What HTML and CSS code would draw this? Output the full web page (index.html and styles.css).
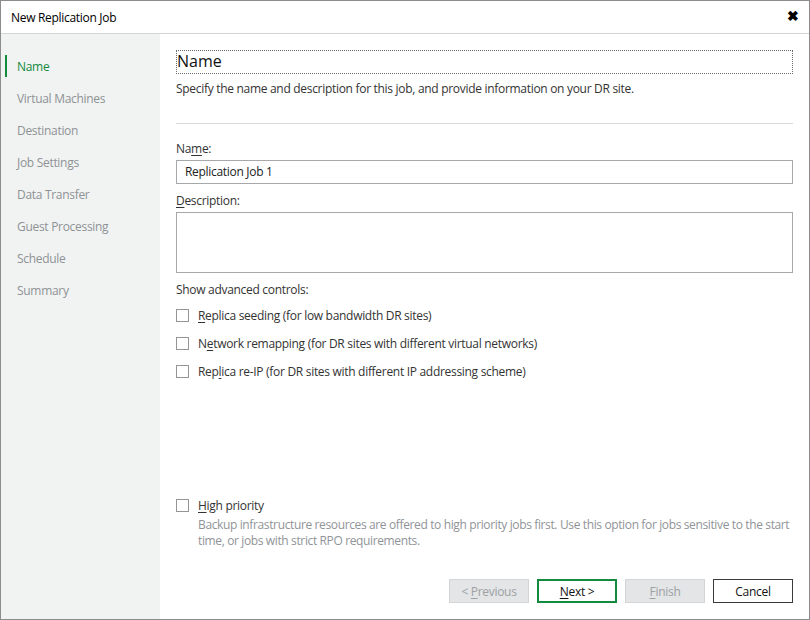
FILE: index.html
```html
<!DOCTYPE html>
<html lang="en">
<head>
  <meta charset="UTF-8" />
  <title>New Replication Job</title>
  <link rel="stylesheet" href="styles.css">
</head>
<body>

<div class="window">
  <div class="titlebar">
    <span class="title">New Replication Job</span>
    <span class="close">&#10006;</span>
  </div>

  <div class="wizard">
    <nav class="steps">
      <div class="step active">Name</div>
      <div class="step">Virtual Machines</div>
      <div class="step">Destination</div>
      <div class="step">Job Settings</div>
      <div class="step">Data Transfer</div>
      <div class="step">Guest Processing</div>
      <div class="step">Schedule</div>
      <div class="step">Summary</div>
    </nav>

    <main class="page">
      <h2 class="page-title">Name</h2>
      <p class="page-desc">Specify the name and description for this job, and provide information on your DR site.</p>
      <div class="divider"></div>

      <label class="field-label first">Na<u>m</u>e:</label>
      <div class="textbox">Replication Job 1</div>

      <label class="field-label"><u>D</u>escription:</label>
      <div class="textbox textarea"></div>

      <div class="section-label">Show advanced controls:</div>
      <div class="check-row"><span class="checkbox"></span><span><u>R</u>eplica seeding (for low bandwidth DR sites)</span></div>
      <div class="check-row"><span class="checkbox"></span><span>N<u>e</u>twork remapping (for DR sites with different virtual networks)</span></div>
      <div class="check-row"><span class="checkbox"></span><span>Rep<u>l</u>ica re-IP (for DR sites with different IP addressing scheme)</span></div>

      <div class="priority">
        <div class="check-row"><span class="checkbox"></span><span><u>H</u>igh priority</span></div>
        <p class="hint">Backup infrastructure resources are offered to high priority jobs first. Use this option for jobs sensitive to the start time, or jobs with strict RPO requirements.</p>
      </div>

      <div class="buttons">
        <button class="btn disabled">&lt; <u>P</u>revious</button>
        <button class="btn primary"><u>N</u>ext &gt;</button>
        <button class="btn disabled"><u>F</u>inish</button>
        <button class="btn">Cancel</button>
      </div>
    </main>
  </div>
</div>

</body>
</html>
```

FILE: styles.css
```css
* { box-sizing: border-box; margin: 0; padding: 0; }
body { background: #fff; font-family: "Open Sans", "Noto Sans", sans-serif; font-size: 12px; letter-spacing: -0.3px; color: #333; }
u { text-decoration: underline; text-underline-offset: 2px; }

.window {
  width: 810px;
  height: 620px;
  border: 1px solid #8c8c8c;
  display: flex;
  flex-direction: column;
}

.titlebar {
  height: 33px;
  border-bottom: 1px solid #d4d4d4;
  display: flex;
  justify-content: space-between;
  align-items: center;
  padding: 0 10px 0 10px;
  color: #000;
}
.title { font-size: 12px; }
.close { font-size: 14px; font-weight: bold; margin-top: -3px; }

.wizard {
  flex: 1;
  display: flex;
}

.steps {
  width: 159px;
  background: #f1f2f2;
  padding-top: 16px;
}
.step {
  height: 32px;
  display: flex;
  align-items: center;
  padding-left: 4px;
  color: #8e9295;
}
.step::before {
  content: "";
  width: 2px;
  height: 22px;
  margin-right: 10px;
  background: transparent;
}
.step.active { color: #138a3e; }
.step.active::before { background: #138a3e; }

.page {
  flex: 1;
  display: flex;
  flex-direction: column;
  padding: 16px 16px 16px 16px;
}

.page-title {
  height: 24px;
  border: 1px dotted #6b6b6b;
  font-size: 16px;
  font-weight: normal;
  letter-spacing: 0;
  line-height: 20px;
  color: #111;
}
.page-desc { margin-top: 7px; line-height: 16px; }
.divider { height: 1px; background: #d9d9d9; margin-top: 26px; }

.field-label { display: block; margin-top: 9px; line-height: 16px; }
.field-label.first { margin-top: 17px; }
.textbox {
  margin-top: 3px;
  height: 24px;
  border: 1px solid #a5a9ac;
  padding: 0 8px;
  line-height: 22px;
  color: #222;
}
.textarea { height: 61px; }

.section-label { margin-top: 9px; line-height: 16px; }

.check-row {
  display: flex;
  align-items: center;
  height: 16px;
  margin-top: 12px;
}
.section-label + .check-row { margin-top: 9px; }
.checkbox {
  width: 13px;
  height: 13px;
  border: 1px solid #959595;
  background: #fff;
  margin-right: 9px;
}

.priority { margin-top: auto; }
.hint {
  margin: 4px 0 0 22px;
  line-height: 16px;
  letter-spacing: -0.37px;
  color: #909497;
}

.buttons {
  margin-top: 30px;
  display: flex;
  justify-content: flex-end;
  gap: 8px;
}
.btn {
  width: 80px;
  height: 24px;
  border: 1px solid #3a3a3a;
  background: #fff;
  font-family: inherit;
  font-size: 12px;
  letter-spacing: -0.3px;
  color: #111;
}
.btn.disabled {
  background: #e3e5e6;
  border-color: #d3d5d6;
  color: #9da1a4;
}
.btn.primary { border: 2px solid #138a3e; }
```
